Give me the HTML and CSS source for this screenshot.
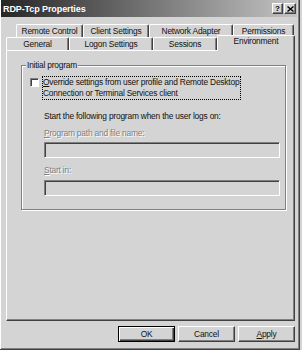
FILE: index.html
```html
<!DOCTYPE html>
<html lang="en">
<head>
    <meta charset="UTF-8">
    <meta name="viewport" content="width=device-width, initial-scale=1.0">
    <title>RDP-Tcp Properties</title>
    <link rel="stylesheet" href="styles.css">
</head>
<body>

<div class="window">
    <div class="titlebar">
        <span class="title">RDP-Tcp Properties</span>
        <div class="title-buttons">
            <button class="tbtn help">?</button>
            <button class="tbtn close">
                <svg width="7" height="6" viewBox="0 0 7 6">
                    <path d="M0.5 0.5 L6.5 5.5 M6.5 0.5 L0.5 5.5" stroke="#000" stroke-width="1.4" fill="none"/>
                </svg>
            </button>
        </div>
    </div>

    <div class="tabs">
        <div class="tab-row back">
            <div class="tab">Remote Control</div>
            <div class="tab">Client Settings</div>
            <div class="tab">Network Adapter</div>
            <div class="tab">Permissions</div>
        </div>
        <div class="tab-row front">
            <div class="tab">General</div>
            <div class="tab">Logon Settings</div>
            <div class="tab">Sessions</div>
            <div class="tab selected">Environment</div>
        </div>
    </div>

    <div class="panel">
        <div class="group">
            <div class="group-title">Initial program</div>
            <div class="check-row">
                <span class="checkbox"></span>
                <label class="focus"><u>O</u>verride settings from user profile and Remote Desktop<br>Connection or Terminal Services client</label>
            </div>
            <p class="hint">Start the following program when the user logs on:</p>
            <label class="field-label disabled"><u>P</u>rogram path and file name:</label>
            <div class="textbox"></div>
            <label class="field-label second disabled"><u>S</u>tart in:</label>
            <div class="textbox second"></div>
        </div>
    </div>

    <div class="buttons">
        <button class="btn default">OK</button>
        <button class="btn">Cancel</button>
        <button class="btn"><u>A</u>pply</button>
    </div>
</div>

</body>
</html>
```

FILE: styles.css
```css
* {
    box-sizing: border-box;
}
body {
    margin: 0;
    background: #d4d4d4;
    font-family: 'Liberation Sans', Arial, sans-serif;
    font-size: 8.4px;
    letter-spacing: -0.2px;
    color: #111;
}
.window {
    width: 300px;
    height: 350px;
    background: #d4d4d4;
    border-right: 1px solid #404040;
    border-bottom: 1px solid #404040;
    box-shadow: inset 1px 0 #fff, inset -1px -1px #808080;
    padding: 0 4px 0 2px;
}
.titlebar {
    display: flex;
    align-items: center;
    justify-content: space-between;
    height: 17px;
    margin: 0 -2px 0 -1px;
    padding: 0 1px 0 2px;
    background: linear-gradient(to right, #262626, #c4c4c4);
}
.title {
    color: #fff;
    font-weight: bold;
    font-size: 9px;
    letter-spacing: -0.1px;
}
.title-buttons {
    display: flex;
    gap: 1px;
}
.tbtn {
    display: flex;
    align-items: center;
    justify-content: center;
    width: 11px;
    height: 11px;
    padding: 0;
    background: #d4d4d4;
    border: 1px solid;
    border-color: #fff #404040 #404040 #fff;
    box-shadow: inset -1px -1px #808080;
    font-family: 'Liberation Sans', Arial, sans-serif;
    font-size: 8px;
    font-weight: bold;
    line-height: 9px;
}
.tbtn.close {
    width: 12px;
}
.tabs {
    margin: 7px 0 0 4px;
    width: 289px;
}
.tab-row {
    display: flex;
    height: 13px;
}
.tab-row.back {
    padding-left: 10px;
}
.tab {
    height: 13px;
    border-top: 1px solid #fff;
    border-left: 1px solid #fff;
    border-right: 1px solid #404040;
    box-shadow: inset -1px 0 #808080;
    border-radius: 2px 2px 0 0;
    text-align: center;
    line-height: 12px;
    white-space: nowrap;
}
.back .tab:nth-child(1) { width: 67px; }
.back .tab:nth-child(2) { width: 66px; }
.back .tab:nth-child(3) { width: 84px; }
.back .tab:nth-child(4) { width: 61px; }
.front .tab:nth-child(1) { width: 63px; }
.front .tab:nth-child(2) { width: 84px; }
.front .tab:nth-child(3) { width: 64px; }
.front .tab:nth-child(4) { width: 78px; }
.tab.selected {
    position: relative;
    z-index: 1;
    height: 16px;
    margin-top: -2px;
    background: #d4d4d4;
    line-height: 11px;
    align-self: flex-start;
}
.panel {
    margin-left: 4px;
    width: 289px;
    height: 271px;
    border-top: 1px solid #fff;
    border-left: 1px solid #fff;
    border-right: 1px solid #404040;
    border-bottom: 1px solid #404040;
    box-shadow: inset -1px -1px #808080;
    padding: 14px 0 0 14px;
}
.group {
    width: 265px;
    height: 145px;
    border: 1px solid #808080;
    box-shadow: inset 1px 1px #fff, 1px 1px #fff;
    padding-left: 8px;
}
.group-title {
    width: fit-content;
    margin: -6px 0 0 -4px;
    padding: 0 1px;
    line-height: 10px;
    background: #d4d4d4;
}
.check-row {
    display: flex;
    align-items: flex-start;
    margin-top: 6px;
}
.checkbox {
    width: 9px;
    height: 9px;
    margin-top: 2px;
    background: #fff;
    border: 1px solid;
    border-color: #808080 #fff #fff #808080;
    box-shadow: inset 1px 1px #404040;
}
.focus {
    margin-left: 3px;
    padding: 0 1px 0 0;
    border: 1px dotted #000;
    line-height: 11px;
}
.hint {
    margin: 11px 0 0 14px;
    line-height: 11px;
}
.field-label {
    display: block;
    margin: 6px 0 0 14px;
    line-height: 11px;
}
.field-label.second {
    margin-top: 7px;
}
.disabled {
    color: #808080;
    text-shadow: 1px 1px 0 #fff;
}
.textbox {
    width: 236px;
    height: 16px;
    margin: 3px 0 0 14px;
    border: 1px solid;
    border-color: #808080 #fff #fff #808080;
    box-shadow: inset 1px 1px #404040;
}
.textbox.second {
    margin-top: 4px;
}
.buttons {
    display: flex;
    justify-content: flex-end;
    gap: 3px;
    width: 293px;
    margin-top: 5px;
}
.btn {
    width: 57px;
    height: 16px;
    padding: 0;
    background: #d4d4d4;
    border: 1px solid;
    border-color: #fff #404040 #404040 #fff;
    box-shadow: inset -1px -1px #808080;
    font-family: 'Liberation Sans', Arial, sans-serif;
    font-size: 8.4px;
    letter-spacing: -0.2px;
    color: #111;
}
.btn.default {
    border-color: #000;
    box-shadow: inset 1px 1px #fff, inset -1px -1px #404040, inset -2px -2px #808080;
}
```
